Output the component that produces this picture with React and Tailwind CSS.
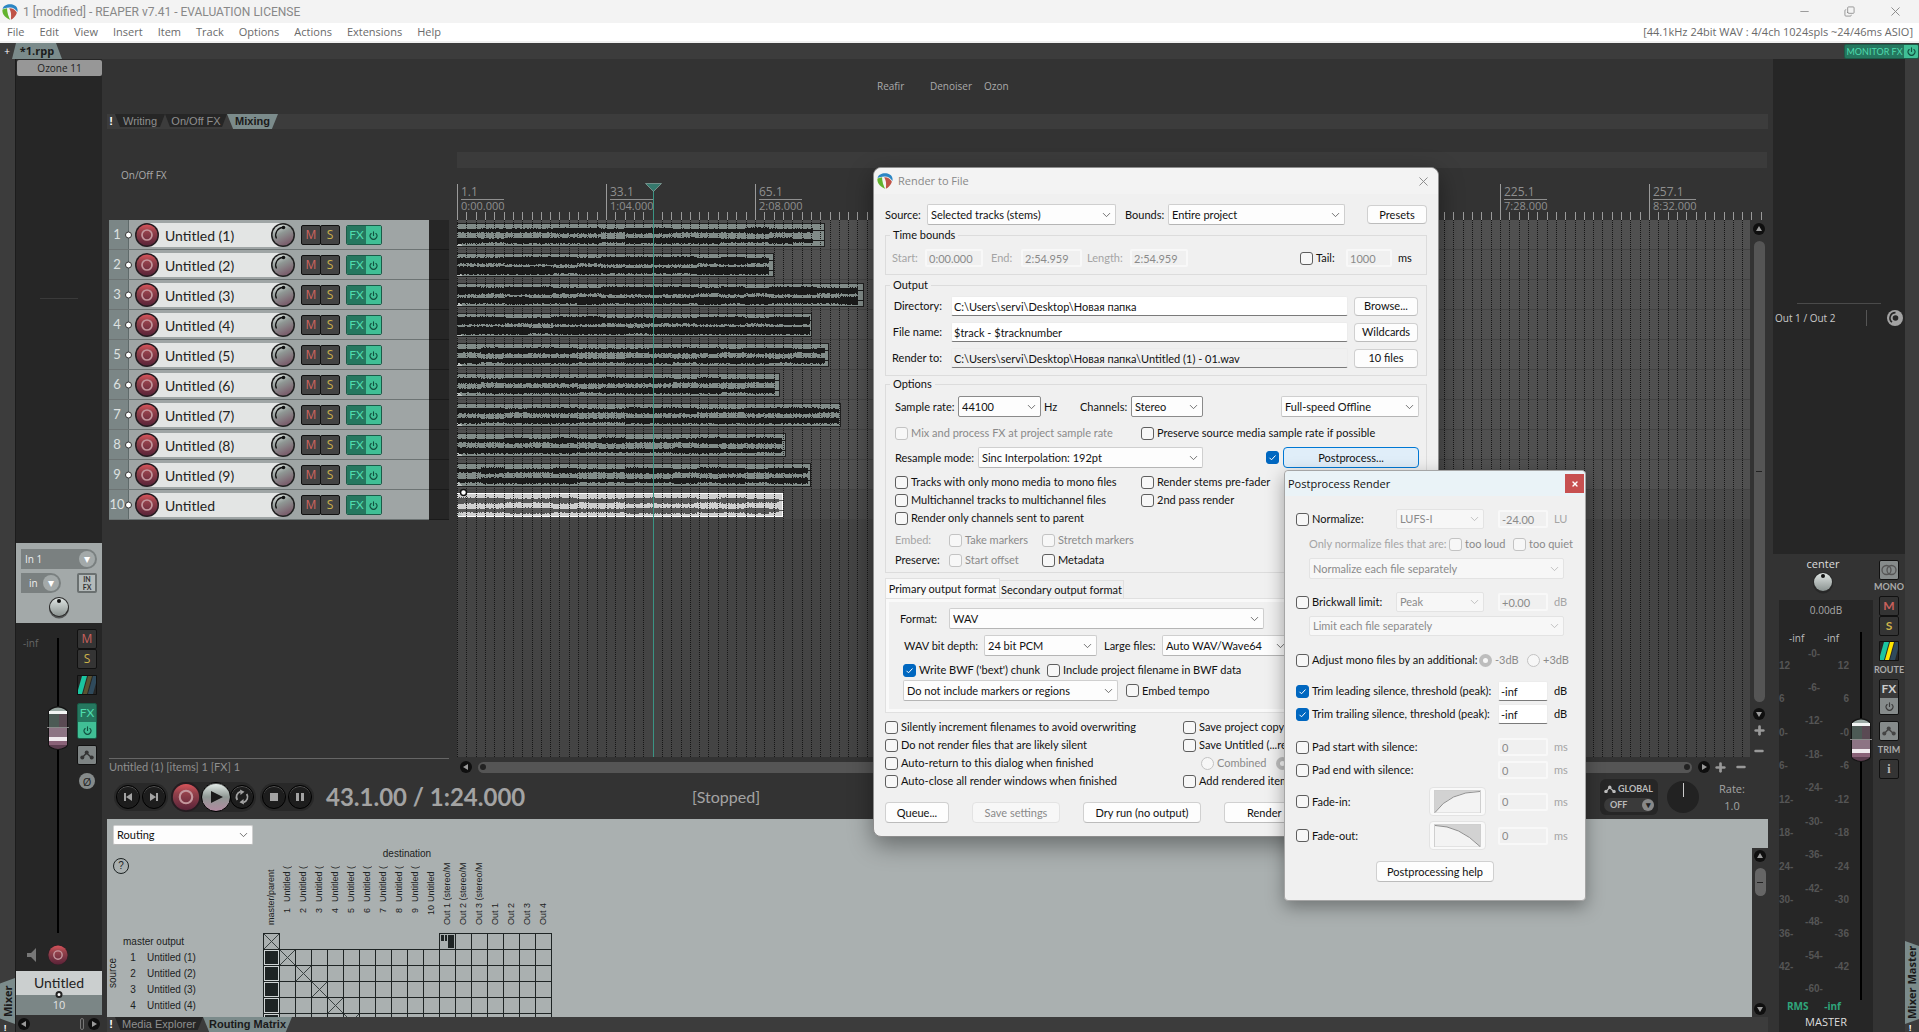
import React from "react";
import { ChevronDown, Power, Minus, Copy, X, Plus } from "lucide-react";

const TRACKS = [
  { n: 1, name: "Untitled (1)", len: 368, tail: 12, amp: 3 },
  { n: 2, name: "Untitled (2)", len: 317, tail: 5, amp: 4 },
  { n: 3, name: "Untitled (3)", len: 407, tail: 6, amp: 4 },
  { n: 4, name: "Untitled (4)", len: 355, tail: 2, amp: 4 },
  { n: 5, name: "Untitled (5)", len: 372, tail: 4, amp: 3 },
  { n: 6, name: "Untitled (6)", len: 323, tail: 5, amp: 3 },
  { n: 7, name: "Untitled (7)", len: 384, tail: 2, amp: 3 },
  { n: 8, name: "Untitled (8)", len: 329, tail: 4, amp: 3 },
  { n: 9, name: "Untitled (9)", len: 354, tail: 3, amp: 3 },
  { n: 10, name: "Untitled", len: 326, tail: 4, amp: 3, selected: true },
];

const RULER = [
  ["1.1", "0:00.000"], ["33.1", "1:04.000"], ["65.1", "2:08.000"], null, null, null, null,
  ["225.1", "7:28.000"], ["257.1", "8:32.000"],
];

const MENU = ["File", "Edit", "View", "Insert", "Item", "Track", "Options", "Actions", "Extensions", "Help"];

const DESTINATIONS = [
  "master/parent",
  ...TRACKS.map((t) => ({ n: t.n, name: t.n === 10 ? "Untitled" : "Untitled (" })),
  "Out 1 (stereo/M", "Out 2 (stereo/M", "Out 3 (stereo/M", "Out 1", "Out 2", "Out 3", "Out 4",
];

const INNER_SCALE = ["-0-", "-6-", "-12-", "-18-", "-24-", "-30-", "-36-", "-42-", "-48-", "-54-", "-60-"];
const OUTER_SCALE = ["12", "6", "0", "6", "12", "18", "24", "30", "36", "42"];

/* ---------- drawings ---------- */

function Logo({ className }) {
  return (
    <svg viewBox="0 0 16 16" className={className} aria-hidden="true">
      <path d="M.6 5C1.4 1.8 4.4.3 8 .3s6.600 1.500 7.400 4.700c.3 1.200.2 2.100 0 3C13.800 5 11 3.200 7.600 3.400 4.800 3.500 2.200 4.300.6 5z" fill="#2c86c4" />
      <path d="M.5 5.600c1.500-.9 3.200-1.300 4.700-1.400L8 15.700C3.800 14.200-.3 10 .5 5.600z" fill="#62b32e" />
      <path d="M7.200 4.200c3.400-.2 6.400 1.600 7.700 4.600-.9 3.300-3.600 6-6.100 6.900 .6-4 .6-8.200-1.600-11.500z" fill="#bf5347" />
      <path d="M5.200 3.800c2.800 1.600 3.900 5.600 3.300 11.900-2-2.600-3.600-7-3.300-11.900z" fill="#f4f4f4" />
    </svg>
  );
}

function RouteIcon({ bright, className }) {
  return (
    <svg viewBox="0 0 20 20" className={className} aria-hidden="true">
      <rect width="20" height="20" rx="1" fill="#111" />
      <rect x="1" y="1" width="18" height="18" fill="#262626" />
      <path d="M5 1h5L5 19H1v-4z" fill="#1bc5a0" />
      <path d="M11 1h4L10 19H6z" fill={bright ? "#ffe600" : "#5b5330"} />
      <path d="M16 1h3v7l-3 11h-5z" fill="#2f4a5c" />
    </svg>
  );
}

function EnvelopeIcon({ className }) {
  return (
    <svg viewBox="0 0 14 10" className={className} aria-hidden="true">
      <path d="M2 8 6.500 3 12 8" fill="none" stroke="currentColor" strokeWidth="1.500" />
      <circle cx="2.300" cy="7.600" r="2" fill="currentColor" />
      <circle cx="6.700" cy="2.600" r="2" fill="currentColor" />
      <circle cx="11.700" cy="7.600" r="2" fill="currentColor" />
    </svg>
  );
}

function RecordIcon({ className, plain }) {
  return (
    <svg viewBox="0 0 24 24" className={className} aria-hidden="true">
      <defs>
        <linearGradient id="rec" x1="0" y1="0" x2="0" y2="1">
          <stop offset="0" stopColor="#d8545a" />
          <stop offset=".35" stopColor="#93414b" />
          <stop offset="1" stopColor="#5a2338" />
        </linearGradient>
      </defs>
      <circle cx="12" cy="12" r="12" fill={plain ? "#3a1a26" : "#241c20"} />
      <circle cx="12" cy="12" r={plain ? 11.500 : 10.500} fill="url(#rec)" />
      <circle cx="12" cy="12" r="5" fill="none" stroke="#c3979d" strokeWidth="1.700" />
    </svg>
  );
}

function PanKnob({ className }) {
  return (
    <svg viewBox="0 0 24 24" className={className} aria-hidden="true">
      <defs>
        <linearGradient id="pan" x1="0" y1="0" x2=".5" y2="1">
          <stop offset="0" stopColor="#e8eeec" />
          <stop offset=".5" stopColor="#8f9794" />
          <stop offset="1" stopColor="#7b5f6d" />
        </linearGradient>
      </defs>
      <circle cx="12" cy="12" r="12" fill="#202020" />
      <circle cx="12" cy="12" r="10.500" fill="url(#pan)" />
      <path d="M12 4.500a7.600 7.600 0 0 0-6.500 11" fill="none" stroke="#111" strokeWidth="1.300" />
      <circle cx="12.500" cy="4.500" r="1.800" fill="#111" />
    </svg>
  );
}

function RoundKnob({ className }) {
  return (
    <svg viewBox="0 0 20 22" className={className} aria-hidden="true">
      <defs>
        <linearGradient id="knob" x1="0" y1="0" x2="0" y2="1">
          <stop offset="0" stopColor="#dfe5e3" />
          <stop offset="1" stopColor="#8b9391" />
        </linearGradient>
      </defs>
      <circle cx="10" cy="11.500" r="10" fill="#222" opacity=".6" />
      <circle cx="10" cy="10" r="10" fill="#2a2a2a" />
      <circle cx="10" cy="10" r="9" fill="url(#knob)" />
      <circle cx="10" cy="4" r="2" fill="#111" />
    </svg>
  );
}

function FaderThumb({ className }) {
  return (
    <svg viewBox="0 0 22 44" className={className} aria-hidden="true">
      <path d="M1 6Q2 1 11 0q9 1 10 6v33q-1 4-10 5-9-1-10-5z" fill="#141414" />
      <path d="M2 6q2-4 9-4.500Q18 2 20 6z" fill="#9aa8a3" />
      <rect x="2" y="5" width="18" height="3" fill="#f2f4f3" />
      <rect x="2" y="8" width="18" height="13" fill="#4c5a55" />
      <rect x="12" y="8" width="8" height="13" fill="#5a4a53" />
      <rect x="0" y="21" width="22" height="1" fill="#8a8a8a" />
      <rect x="2" y="22" width="18" height="11" fill="#8d7484" />
      <rect x="2" y="31" width="18" height="4" fill="#f0eaee" />
      <rect x="2" y="35" width="18" height="4" fill="#8a6278" />
      <path d="M2 39h18q-2 3-9 4-7-1-9-4z" fill="#5d3f51" />
    </svg>
  );
}

// Deterministic noise, so that each clip keeps the same shape between renders
function noise(seed) {
  let s = seed * 7919 + 17;
  return () => {
    s = (s * 1103515245 + 12345) % 2147483648;
    return s / 2147483648;
  };
}

function wavePath(track, cy, seed) {
  const rnd = noise(seed);
  let d = "";
  let level = track.amp - 1;
  let spiky = 0.3;
  const end = track.len - track.tail;
  for (let x = 0; x < end; x++) {
    if (x % 24 === 0) {
      level = track.amp - (rnd() < 0.4 ? 1 : 0);
      spiky = rnd() * 0.4;
    }
    const up = level + (rnd() < spiky ? 1 : 0);
    const down = level - 1 + (rnd() < 0.6 ? 1 : 0);
    d += `M${x} ${cy - up}h1v${up + down}h-1z`;
  }
  return `${d}M${end} ${cy - 1}H${track.len}v1H${end}z`;
}

function Clip({ track }) {
  const sel = track.selected;
  return (
    <svg width={track.len} height="24" className="block" shapeRendering="crispEdges" aria-hidden="true">
      <rect width={track.len} height="24" fill={sel ? "#ffffff" : "#1f1f1f"} />
      <rect y="1" width={track.len - 1} height="22" fill={sel ? "#cfcfcf" : "#818b88"} />
      <path d="M0 18l5 5H0z" fill="#b9bfbd" />
      <path d={wavePath(track, 8, track.n)} fill={sel ? "#555555" : "#1a1a1a"} />
      <path d={wavePath(track, 18, track.n + 40)} fill={sel ? "#555555" : "#1a1a1a"} />
    </svg>
  );
}

function ArrowDot({ dir = "up", className = "" }) {
  const points = {
    up: "6,3 9,8 3,8", down: "6,9 9,4 3,4", left: "3,6 8,3 8,9", right: "9,6 4,3 4,9",
  };
  return (
    <svg viewBox="0 0 12 12" className={`size-3 shrink-0 ${className}`} aria-hidden="true">
      <circle cx="6" cy="6" r="6" fill="#0f0f0f" />
      <polygon points={points[dir]} fill="#9a9a9a" />
    </svg>
  );
}

/* ---------- mixer buttons ---------- */

function SmallButton({ children, label, bg = "bg-[#343434]", className = "" }) {
  return (
    <button type="button" aria-label={label} className={`flex size-5 shrink-0 items-center justify-center rounded-xs border border-[#111] text-[12px] leading-none ${bg} ${className}`}>
      {children}
    </button>
  );
}

function StackedFx({ on }) {
  return (
    <div className={`flex w-5 flex-col overflow-hidden rounded-xs border ${on ? "border-[#1a5c48]" : "border-[#111]"}`}>
      <button type="button" className={`flex h-[18px] items-center justify-center font-['Lato',sans-serif] text-[12px] leading-none ${on ? "bg-[#25775f] text-[#4fdcae]" : "bg-[#3a3a3a] text-[#ccc]"}`}>FX</button>
      <button type="button" aria-label="Bypass FX" className={`flex h-4 items-center justify-center ${on ? "bg-[#40bf95] text-[#125240]" : "bg-[#868b8b] text-[#3a3a3a]"}`}>
        <Power size={9} strokeWidth={3} />
      </button>
    </div>
  );
}

function LeftMixer() {
  return (
    <aside className="flex w-[87px] shrink-0 flex-col border-l border-[#1c1c1c] bg-[#262626] text-[11px] font-['Open_Sans',sans-serif]">
      <button type="button" className="mt-px ml-px h-4 rounded-xs bg-[#979797] text-[10px] leading-4 text-[#222]">Ozone 11</button>
      <div className="mx-6 mt-[222px] h-px bg-[#3a3a3a]" />
      <div className="flex-1" />
      <div className="flex h-20 flex-col bg-[#a3a9a9] px-[5px] pt-1.5">
        <button type="button" className="flex h-5 items-center justify-between rounded-l-xs rounded-r-full bg-[#7a8080] pr-0.5 pl-1 text-[10px] text-[#eee]">
          In 1
          <span className="flex size-4 items-center justify-center rounded-full bg-[#a3a9a9] text-[12px] text-white">▾</span>
        </button>
        <div className="mt-1 flex justify-between">
          <button type="button" className="flex h-5 w-10 items-center justify-between rounded-l-xs rounded-r-full bg-[#7a8080] pr-0.5 pl-2 text-[10px] text-[#eee]">
            in
            <span className="flex size-4 items-center justify-center rounded-full bg-[#a3a9a9] text-[12px] text-white">▾</span>
          </button>
          <button type="button" className="flex size-5 flex-col items-center justify-center rounded-xs border-2 border-[#6a7070] bg-[#b4baba] font-['Lato',sans-serif] text-[7px] leading-[8px] font-bold text-[#333]">
            <span>IN</span><span>FX</span>
          </button>
        </div>
        <RoundKnob className="mt-1 w-5 self-center" />
      </div>

      <div className="flex h-[348px] pt-1.5 pr-[5px]">
        <div className="flex w-[31px] flex-col justify-between pl-[7px]">
          <span className="mt-1.5 text-[10px] leading-4 text-[#666]">-inf</span>
          <svg viewBox="0 0 10 14" className="mb-[9px] ml-1 h-3.5 w-2.5" aria-hidden="true"><path d="M0 5h4l5-5v14L4 9H0z" fill="#777" /></svg>
        </div>
        <div className="flex w-[22px] flex-col items-center">
          <div className="mt-[9px] h-[68px] w-[2px] bg-black" />
          <FaderThumb className="w-[22px]" />
          <div className="h-[183px] w-[2px] bg-black" />
          <RecordIcon plain className="mt-3 w-5" />
        </div>
        <div className="ml-auto flex w-5 flex-col items-center">
          <SmallButton label="Mute" className="text-[#c9605c]">M</SmallButton>
          <SmallButton label="Solo" className="text-[#cdb24a]">S</SmallButton>
          <RouteIcon className="mt-1.5 w-5 shrink-0" />
          <div className="mt-2"><StackedFx on /></div>
          <SmallButton label="Envelopes" bg="bg-[#7e8484]" className="mt-1.5 text-[#333]"><EnvelopeIcon className="w-3.5" /></SmallButton>
          <span className="mt-2 flex size-4 items-center justify-center rounded-full bg-[#868b8b] text-[11px] leading-none text-[#222]">Ø</span>
        </div>
      </div>

      <div className="h-6 bg-[#cbcfcf] text-center font-['Lato',sans-serif] text-[14px] leading-6 text-[#222]">Untitled</div>
      <div className="relative h-5 bg-[#7b8686] text-center text-[11px] leading-5 text-[#e2e2e2]">
        <span className="absolute -top-1 left-1/2 size-[7px] -translate-x-1/2 rounded-full border-2 border-[#222] bg-white" />
        10
      </div>
      <div className="flex h-[17px] items-center bg-[#333] px-0.5">
        <ArrowDot dir="left" />
        <span className="mr-1 ml-auto h-3 w-1 rounded-full border border-[#777]" />
        <ArrowDot dir="right" />
      </div>
    </aside>
  );
}

function MasterMixer() {
  return (
    <aside className="ml-[5px] flex w-[132px] shrink-0 flex-col bg-[#333] text-[11px] font-['Open_Sans',sans-serif]">
      <div className="flex min-h-0 flex-1 flex-col bg-[#262626]">
        <div className="mx-6 mt-[244px] h-px bg-[#4a4a4a]" />
        <div className="mt-1.5 flex items-center pr-0.5 pl-0.5 text-[10px] text-[#c8c8c8]">
          <span>Out 1 / Out 2</span>
          <span className="mr-5 ml-auto h-4 w-px bg-[#555]" />
          <svg viewBox="0 0 16 16" className="w-4" aria-hidden="true">
            <circle cx="8" cy="8" r="8" fill="#a3a3a3" />
            <path d="M8.500 2.600a5.400 5.400 0 0 0-3.500 9.600" fill="none" stroke="#262626" strokeWidth="1.600" />
            <circle cx="8.500" cy="8" r="2.800" fill="#262626" />
          </svg>
        </div>
      </div>

      <div className="flex h-[478px] shrink-0">
        <div className="ml-1.5 flex w-[94px] flex-col">
          <div className="flex h-[46px] shrink-0 flex-col items-center pt-0.5 pr-1.5">
            <span className="text-[11px] leading-4 text-[#ddd]">center</span>
            <RoundKnob className="w-5" />
          </div>
          <div className="flex min-h-0 flex-1 flex-col bg-[#262626]">
            <span className="pt-1 text-center text-[10px] leading-3 text-[#aaa]">0.00dB</span>
            <div className="mt-4 flex flex-1">
              <div className="flex w-[70px] flex-col">
                <div className="flex justify-between px-2.5 text-[10px] leading-3 text-[#bbb]"><span>-inf</span><span>-inf</span></div>
                <div className="mt-1 flex justify-between font-['Liberation_Sans',sans-serif] text-[10px] leading-3 font-bold text-[#555]">
                  <div className="mt-3 flex h-[313px] w-4 flex-col justify-between">
                    {OUTER_SCALE.map((v, i) => <span key={i}>{i > 1 ? `${v}-` : v}</span>)}
                  </div>
                  <div className="flex h-[347px] flex-col items-center justify-between">
                    {INNER_SCALE.map((v) => <span key={v}>{v}</span>)}
                  </div>
                  <div className="mt-3 flex h-[313px] w-4 flex-col items-end justify-between">
                    {OUTER_SCALE.map((v, i) => <span key={i}>{i > 1 ? `-${v}` : v}</span>)}
                  </div>
                </div>
              </div>
              <div className="ml-px flex w-[22px] flex-col items-center">
                <div className="h-[86px] w-[2px] bg-black" />
                <FaderThumb className="w-[22px]" />
                <div className="h-[238px] w-[2px] bg-black" />
              </div>
            </div>
            <div className="flex h-3 w-[70px] shrink-0 items-center justify-between px-2 text-[10px] leading-3 font-bold text-[#2fa57c]"><span>RMS</span><span>-inf</span></div>
            <span className="shrink-0 pb-0.5 text-center text-[11px] leading-[19px] text-[#ddd]">MASTER</span>
          </div>
        </div>
        <div className="flex flex-1 flex-col items-center pt-1.5 font-['Lato',sans-serif] text-[9px] leading-[14px] font-bold text-[#aaa]">
          <SmallButton label="Mono" bg="bg-[#868b8b]" className="text-[#555]">
            <svg viewBox="0 0 16 12" className="w-4" aria-hidden="true" fill="none" stroke="currentColor" strokeWidth="1.300"><circle cx="5.500" cy="6" r="4.500" /><circle cx="10.500" cy="6" r="4.500" /></svg>
          </SmallButton>
          <span className="mb-0.5">MONO</span>
          <SmallButton label="Mute" className="text-[#c9605c]">M</SmallButton>
          <SmallButton label="Solo" className="text-[#cdb24a]">S</SmallButton>
          <RouteIcon bright className="mt-[5px] w-5 shrink-0" />
          <span className="mt-0.5 mb-0.5">ROUTE</span>
          <StackedFx />
          <SmallButton label="Trim envelope" bg="bg-[#868b8b]" className="mt-1.5 text-[#444]"><EnvelopeIcon className="w-3.5" /></SmallButton>
          <span className="mt-0.5 mb-0.5">TRIM</span>
          <SmallButton label="Project info" className="font-['Liberation_Serif',serif] font-bold text-[#bbb]">i</SmallButton>
        </div>
      </div>
    </aside>
  );
}

/* ---------- arrange view ---------- */

function TrackPanel() {
  return (
    <div className="ml-0.5 w-[340px]">
      {TRACKS.map((t) => (
        <div key={t.n} className="flex h-[30px] border-b border-[#6d7474] bg-[#9fa5a5]">
          <div className="relative flex w-5 items-center border-r border-[#5f6a6a] bg-[#7b8686] font-['Lato',sans-serif] text-[13px] text-[#dde1e1]">
            <span className="w-4 text-center">{t.n}</span>
            <span className="absolute top-1/2 -right-1 size-[7px] -translate-y-1/2 rounded-full border border-[#333] bg-white" />
          </div>
          <div className="flex flex-1 items-center pt-px pl-1.5">
            <button type="button" aria-label={`Record arm ${t.n}`} className="z-10"><RecordIcon className="block w-6" /></button>
            <div className="-mx-3 flex h-6 w-[136px] items-center bg-[#e3e5e4] pl-[18px] font-['Lato',sans-serif] text-[14px] text-[#222]">{t.name}</div>
            <button type="button" aria-label={`Pan ${t.n}`} className="z-10 mr-1.5"><PanKnob className="block w-6" /></button>
            <SmallButton label={`Mute ${t.n}`} bg="bg-[#434343]" className="text-[#d0645f]">M</SmallButton>
            <SmallButton label={`Solo ${t.n}`} bg="bg-[#434343]" className="-ml-px text-[#cdb24a]">S</SmallButton>
            <div className="ml-1.5 flex h-5 w-9 overflow-hidden rounded-xs border border-[#1a5c48]">
              <button type="button" className="w-[19px] bg-[#25775f] font-['Lato',sans-serif] text-[12px] leading-none text-[#4fdcae]">FX</button>
              <button type="button" aria-label={`Bypass FX ${t.n}`} className="flex flex-1 items-center justify-center bg-[#40bf95] text-[#125240]"><Power size={9} strokeWidth={3} /></button>
            </div>
          </div>
          <div className="-mb-px w-5 border-b border-[#1a1a1a] bg-[#262626]" />
        </div>
      ))}
    </div>
  );
}

function Ruler() {
  return (
    <div className="flex h-9 shrink-0 overflow-hidden font-['Open_Sans',sans-serif] text-[#8f8f8f]">
      {RULER.map((cell, i) => (
        <div key={i} className="flex w-[149px] shrink-0 flex-col justify-between border-l border-[#9a9a9a]">
          <div className="ml-[3px] h-7 pt-px">
            {cell && (
              <>
                <div className="w-[43px] border-b border-[#8f8f8f] text-[12px] leading-[14px]">{cell[0]}</div>
                <div className="text-[11px] leading-[12px]">{cell[1]}</div>
              </>
            )}
          </div>
          <svg width="148" height="8" className="block" shapeRendering="crispEdges" aria-hidden="true">
            {Array.from({ length: 15 }, (_, k) => (
              <rect key={k} x={Math.round(((k + 1) * 149) / 16) - 1} width="1" height="8" fill="#9a9a9a" />
            ))}
          </svg>
        </div>
      ))}
    </div>
  );
}

function Arrange() {
  return (
    <div className="relative flex min-h-0 flex-1 flex-col">
      <Ruler />
      <div className="flex min-h-0 flex-1">
        <div className="relative min-w-0 flex-1 overflow-hidden bg-[#444]">
          {TRACKS.map((t) => (
            <div key={t.n} className={`h-[30px] border-b border-[#434343] pt-[3px] ${t.selected ? "bg-[#4a4a4a]" : "bg-[#505050]"}`}>
              <Clip track={t} />
            </div>
          ))}
          <svg className="absolute inset-0 h-full w-full" shapeRendering="crispEdges" aria-hidden="true">
            {Array.from({ length: 139 }, (_, i) => {
              const x = Math.round((i * 149) / 16) + 0.5;
              return <line key={i} x1={x} x2={x} y1="0" y2="100%" stroke="#161616" strokeDasharray="1 1" />;
            })}
            <circle cx="6.500" cy="272.500" r="3" fill="#fff" stroke="#111" strokeWidth="1.500" shapeRendering="auto" />
          </svg>
        </div>
        <div className="flex w-[18px] flex-col items-center pt-[3px] text-[#999]">
          <ArrowDot dir="up" />
          <div className="my-1.5 flex w-[11px] flex-1 items-center justify-center rounded-full bg-[#555]"><span className="h-px w-1.5 bg-[#222]" /></div>
          <ArrowDot dir="down" />
          <Plus size={13} strokeWidth={5} className="mt-1" />
          <Minus size={12} strokeWidth={5} className="mt-2" />
        </div>
      </div>
      <div className="flex h-[19px] items-center pt-px pl-[3px] text-[#999]">
        <ArrowDot dir="left" />
        <div className="mx-1.5 flex h-[11px] flex-1 items-center justify-between rounded-full bg-[#555] px-0.5">
          <span className="size-1.5 rounded-full bg-[#222]" /><span className="size-1.5 rounded-full bg-[#222]" />
        </div>
        <ArrowDot dir="right" />
        <Plus size={13} strokeWidth={5} className="ml-1" />
        <Minus size={12} strokeWidth={5} className="mr-[21px] ml-2" />
      </div>
      {/* Edit cursor */}
      <div className="absolute top-0 bottom-[19px] left-[196px] w-px bg-[#3a9484]" />
      <svg viewBox="0 0 17 9" className="absolute top-[-1px] left-[188px] w-[17px]" aria-hidden="true"><path d="M.5.500h16L8.500 8.500z" fill="#35796d" stroke="#8fa9a4" strokeWidth=".7" /></svg>
    </div>
  );
}

function RoundButton({ label, children, className = "size-6 bg-[#1d1d1d]" }) {
  return (
    <button type="button" aria-label={label} className={`flex shrink-0 items-center justify-center rounded-full border border-black shadow-[inset_0_1px_0_#555] ${className}`}>
      {children}
    </button>
  );
}

function Transport() {
  return (
    <div className="flex h-[43px] shrink-0 items-center pb-px pl-[7px] text-[#a3a3a3]">
      <div className="flex items-center gap-0.5 rounded-full bg-[#282828] px-0.5 py-0.5">
        <RoundButton label="Go to start"><svg viewBox="0 0 10 10" className="w-2.5" fill="currentColor"><path d="M1 1h2v8H1zM9 1v8L3 5z" /></svg></RoundButton>
        <RoundButton label="Go to end"><svg viewBox="0 0 10 10" className="w-2.5" fill="currentColor"><path d="M7 1h2v8H7zM1 1v8l6-4z" /></svg></RoundButton>
      </div>
      <div className="ml-[3px] flex items-center rounded-full bg-[#282828] pr-0.5">
        <RecordIcon className="w-[30px]" />
        <RoundButton label="Play" className="size-[30px] bg-linear-to-b from-[#e9f2ee] via-[#8f9894] to-[#b08aa0] text-[#1a1a1a]"><svg viewBox="0 0 10 10" className="ml-0.5 w-3" fill="currentColor"><path d="M0 0v10l10-5z" /></svg></RoundButton>
        <RoundButton label="Repeat" className="-ml-px size-6 bg-[#1d1d1d]">
          <svg viewBox="0 0 16 16" className="w-4" fill="none" stroke="currentColor" strokeWidth="1.800"><path d="M3.300 11A5.500 5.500 0 0 1 6.500 2.700M12.700 5A5.500 5.500 0 0 1 9.500 13.300" /><path d="M6 .5 10.500 2.700 6.500 6zM10 15.500 5.500 13.300 9.500 10z" fill="currentColor" stroke="none" /></svg>
        </RoundButton>
      </div>
      <div className="ml-1 flex items-center gap-0.5 rounded-full bg-[#282828] px-0.5 py-0.5">
        <RoundButton label="Stop"><span className="size-2 bg-[#a3a3a3]" /></RoundButton>
        <RoundButton label="Pause"><span className="h-2 w-2 border-x-3 border-[#a3a3a3]" /></RoundButton>
      </div>
      <span className="ml-3 w-[366px] font-['Lato',sans-serif] text-[24px] leading-none font-bold">43.1.00 / 1:24.000</span>
      <span className="text-[16px] leading-none font-['Lato',sans-serif]">[Stopped]</span>
      <div className="ml-auto flex h-9 w-[58px] flex-col justify-center gap-0.5 rounded-md bg-[#262626] px-1 font-['Lato',sans-serif] text-[9px] font-bold text-[#bbb]">
        <span className="flex items-center gap-0.5 leading-[14px]"><EnvelopeIcon className="w-3" />GLOBAL</span>
        <button type="button" className="flex h-[14px] items-center justify-between rounded-full bg-[#3a3a3a] pl-1.5">OFF<span className="flex size-3 items-center justify-center rounded-full bg-[#888] text-[9px] text-[#222]">▾</span></button>
      </div>
      <div className="ml-[9px] flex size-8 justify-center rounded-full bg-[#222] pt-0.5"><span className="h-3.5 w-px bg-[#ccc]" /></div>
      <div className="mr-[17px] ml-3.5 flex w-[38px] flex-col items-center font-['Open_Sans',sans-serif] text-[11px] leading-[17px]"><span>Rate:</span><span>1.0</span></div>
    </div>
  );
}

/* ---------- routing matrix ---------- */

function Cell({ row, col }) {
  if (row === 0 && col > 0 && col < 11) return <td className="p-0" />;
  const cross = row === col;
  return (
    <td className="h-4 border border-[#1e2424] p-0 text-[#3a4242]">
      {cross && <svg viewBox="0 0 15 15" className="block size-[15px]" aria-hidden="true"><path d="M0 0 15 15M15 0 0 15" stroke="currentColor" /></svg>}
      {row > 0 && col === 0 && <div className="size-[15px] border border-[#cfd4d4] bg-[#1e2424]" />}
      {row === 0 && col === 11 && <div className="flex h-[13px] gap-px px-px"><span className="h-1.5 w-[3px] bg-[#1e2424]" /><span className="h-1.5 w-[2px] bg-[#1e2424]" /><span className="w-1.5 bg-[#1e2424]" /></div>}
    </td>
  );
}

function RoutingMatrix() {
  return (
    <section className="flex h-[198px] shrink-0 bg-[#aab0b0] font-['Liberation_Sans',sans-serif] text-[10px] text-[#1c2222]">
      <div className="flex min-w-0 flex-1 flex-col overflow-hidden pl-1.5">
        <div className="mt-1.5 h-5 w-[140px] shrink-0">
          <Select id="matrix-mode" label="Matrix mode" value="Routing" className="h-5 w-full" />
        </div>
        <div className="flex">
          <div className="flex w-2.5 shrink-0 flex-col">
            <button type="button" aria-label="Help" className="mt-[13px] size-4 rounded-full border border-[#1c2222] text-[10px] leading-none">?</button>
            <span className="mt-[84px] -ml-1.5 w-3 rotate-180 leading-3 [writing-mode:vertical-rl]">source</span>
          </div>
          <table className="w-[428px] table-fixed border-collapse">
            <colgroup>
              <col className="w-5" /><col className="w-[120px]" />
              {DESTINATIONS.map((_, i) => <col key={i} className="w-4" />)}
            </colgroup>
            <thead>
              <tr>
                <td colSpan="2" />
                <th colSpan="18" className="h-[18px] p-0 pb-0.5 text-center align-bottom font-normal leading-[14px]">destination</th>
              </tr>
              <tr>
                <td colSpan="2" />
                {DESTINATIONS.map((d, i) => (
                  <th key={i} className="h-[70px] p-0 align-bottom text-[9px] font-normal">
                    <div className="flex h-[62px] w-4 rotate-180 items-center overflow-hidden leading-4 whitespace-nowrap [writing-mode:vertical-rl]">
                      {d.n ? <><span className="h-6 shrink-0 pt-2">{d.n}</span><span className="shrink-0">{d.name}</span></> : d}
                    </div>
                    <div className="h-2" />
                  </th>
                ))}
              </tr>
            </thead>
            <tbody>
              {[0, 1, 2, 3, 4, 5].map((r) => (
                <tr key={r} className="h-4 leading-[15px]">
                  {r === 0 ? <th colSpan="2" className="p-0 text-left font-normal">master output</th> : (
                    <>
                      <th className="p-0 text-center font-normal">{r < 5 ? r : ""}</th>
                      <th className="p-0 pl-1 text-left font-normal">{r < 5 ? `Untitled (${r})` : ""}</th>
                    </>
                  )}
                  {DESTINATIONS.map((_, c) => <Cell key={c} row={r} col={c} />)}
                </tr>
              ))}
            </tbody>
          </table>
        </div>
      </div>
      <div className="mt-[29px] flex w-4 flex-col items-center bg-[#333] py-0.5">
        <ArrowDot dir="up" />
        <div className="mt-1.5 flex h-7 w-[11px] items-center justify-center rounded-full bg-[#666]"><span className="h-px w-1.5 bg-[#222]" /></div>
        <ArrowDot dir="down" className="mt-auto" />
      </div>
    </section>
  );
}

/* ---------- dialog controls ---------- */

function Select({ id, label, value, className = "", disabled, strong }) {
  const border = strong ? "border-[#8a8a8a]" : disabled ? "border-[#e3e3e3]" : "border-[#cfcfcf] border-b-[#b5b5b5]";
  return (
    <div className={`relative shrink-0 ${className}`}>
      <select id={id} aria-label={label} disabled={disabled} defaultValue={value} className={`h-full w-full appearance-none rounded-xs border pl-[3px] font-['Lato',sans-serif] text-[11px] opacity-100 ${border} ${disabled ? "bg-[#f7f7f7] text-[#8a8a8a]" : "bg-[#fdfdfd] text-[#111]"}`}>
        <option>{value}</option>
      </select>
      <ChevronDown size={13} strokeWidth={1.500} className={`pointer-events-none absolute top-1/2 right-[3px] -translate-y-1/2 ${disabled ? "text-[#b5b5b5]" : "text-[#555]"}`} />
    </div>
  );
}

function Check({ label, checked, disabled, className = "", name }) {
  return (
    <label className={`flex items-center gap-[3px] whitespace-nowrap ${disabled ? "text-[#8a8a8a]" : "text-[#111]"} ${className}`}>
      <span className="relative flex size-[13px] shrink-0">
        <input type="checkbox" aria-label={label ? undefined : name} defaultChecked={checked} disabled={disabled} className="peer size-[13px] appearance-none rounded-[3px] border border-[#5e5e5e] bg-[#f7f7f7] checked:border-[#0067c0] checked:bg-[#0067c0] disabled:border-[#c3c3c3]" />
        <svg viewBox="0 0 13 13" className="pointer-events-none absolute inset-0 hidden peer-checked:block" aria-hidden="true"><path d="m3.500 6.800 2 2 4-4.300" fill="none" stroke="#fff" /></svg>
      </span>
      {label}
    </label>
  );
}

function Radio({ label, name, checked, className = "" }) {
  return (
    <label className={`flex items-center gap-[3px] text-[#8a8a8a] ${className}`}>
      <input type="radio" name={name} disabled defaultChecked={checked} aria-label={label || "Separate"} className="size-[13px] shrink-0 appearance-none rounded-full border border-[#c3c3c3] bg-[#f7f7f7] checked:border-4 checked:border-[#bdbdbd]" />
      {label}
    </label>
  );
}

function Text({ id, label, value, disabled, readOnly, className = "" }) {
  const look = disabled
    ? "border-2 border-[#f8f8f8] bg-[#f0f0f0] text-[#8a8a8a]"
    : `border border-[#ececec] border-b-[#7a7a7a] text-[#111] ${readOnly ? "bg-[#f0f0f0]" : "bg-white"}`;
  return <input id={id} type="text" aria-label={label} defaultValue={value} disabled={disabled} readOnly={readOnly} className={`min-w-0 shrink-0 rounded-xs pl-0.5 ${look} ${className}`} />;
}

function Button({ children, disabled, className = "" }) {
  return (
    <button type="button" disabled={disabled} className={`shrink-0 rounded-sm border whitespace-nowrap ${disabled ? "border-[#e3e3e3] bg-[#f7f7f7] text-[#8a8a8a]" : "border-[#d0d0d0] border-b-[#bcbcbc] bg-[#fdfdfd] text-[#111]"} ${className}`}>
      {children}
    </button>
  );
}

function Group({ title, children, className }) {
  return (
    <fieldset className={`min-w-0 border border-[#dcdcdc] ${className}`}>
      <legend className="ml-1 px-[3px] leading-[14px]">{title}</legend>
      {children}
    </fieldset>
  );
}

function RenderDialog() {
  return (
    <div role="dialog" aria-label="Render to File" className="absolute top-[167px] left-[873px] w-[566px] rounded-lg border border-[#8d8d8d] bg-[#f0f0f0] font-['Lato',sans-serif] text-[11px] leading-[14px] text-[#111] shadow-[0_8px_24px_rgba(0,0,0,0.4)]">
      <div className="flex h-[26px] items-center rounded-t-lg bg-[#f3f3f3] pr-[7px] pl-[3px]">
        <Logo className="w-4" />
        <span className="ml-[5px] font-['Open_Sans',sans-serif] text-[11px] text-[#888]">Render to File</span>
        <button type="button" aria-label="Close dialog" className="ml-auto text-[#888]"><X size={15} strokeWidth={1.500} /></button>
      </div>

      <div className="px-[11px] pb-[13px]">
        <div className="mt-2.5 flex h-[21px] items-center">
          <label htmlFor="source" className="w-[42px]">Source:</label>
          <Select id="source" value="Selected tracks (stems)" className="h-[21px] w-[189px]" />
          <label htmlFor="bounds" className="ml-[9px] w-[43px]">Bounds:</label>
          <Select id="bounds" value="Entire project" className="h-[21px] w-[177px]" />
          <Button className="ml-auto h-[19px] w-[60px]">Presets</Button>
        </div>

        <Group title="Time bounds" className="mt-[3px] pt-[7px] pb-[7px]">
          <div className="flex h-[18px] items-center pl-1.5 text-[#a5a5a5]">
            <label htmlFor="start" className="w-[33px]">Start:</label>
            <Text id="start" value="0:00.000" disabled className="h-[18px] w-[58px]" />
            <label htmlFor="end" className="ml-2 w-[30px]">End:</label>
            <Text id="end" value="2:54.959" disabled className="h-[18px] w-[61px]" />
            <label htmlFor="length" className="ml-[5px] w-[43px]">Length:</label>
            <Text id="length" value="2:54.959" disabled className="h-[18px] w-[58px]" />
            <Check label="Tail:" className="ml-auto w-[46px]" />
            <Text label="Tail length" value="1000" disabled className="h-[18px] w-[46px]" />
            <span className="mr-3 ml-1.5 w-4 text-[#111]">ms</span>
          </div>
        </Group>

        <Group title="Output" className="mt-[3px] pt-1 pb-[7px]">
          <div className="flex flex-col gap-1.5">
            {[
              ["dir", "Directory:", "C:\\Users\\servi\\Desktop\\Новая папка", "Browse..."],
              ["file", "File name:", "$track - $tracknumber", "Wildcards"],
              ["target", "Render to:", "C:\\Users\\servi\\Desktop\\Новая папка\\Untitled (1) - 01.wav", "10 files"],
            ].map(([id, label, value, action]) => (
              <div key={id} className="flex h-5 items-center pr-2">
                <label htmlFor={id} className="mr-[9px] w-14 text-right whitespace-nowrap">{label}</label>
                <Text id={id} value={value} readOnly={id === "target"} className="h-5 flex-1" />
                <Button className="ml-1.5 h-[19px] w-16">{action}</Button>
              </div>
            ))}
          </div>
        </Group>

        <Group title="Options" className="mt-px pt-[5px] pb-[3px]">
          <div className="flex h-[21px] items-center pr-[7px] pl-[9px]">
            <label htmlFor="rate" className="w-[63px]">Sample rate:</label>
            <Select id="rate" value="44100" strong className="h-[21px] w-[83px]" />
            <span className="w-[39px] pl-[3px]">Hz</span>
            <label htmlFor="channels" className="w-[51px]">Channels:</label>
            <Select id="channels" value="Stereo" strong className="h-[21px] w-[72px]" />
            <Select label="Render speed" value="Full-speed Offline" className="ml-auto h-[21px] w-[138px]" />
          </div>
          <div className="mt-[7px] grid h-[18px] grid-cols-[246px_1fr] items-center pl-[9px]">
            <Check label="Mix and process FX at project sample rate" disabled />
            <Check label="Preserve source media sample rate if possible" />
          </div>
          <div className="mt-[5px] flex h-[21px] items-center pr-[7px] pl-[9px]">
            <label htmlFor="resample" className="w-[83px]">Resample mode:</label>
            <Select id="resample" value="Sinc Interpolation: 192pt" className="h-[21px] w-[225px]" />
            <Check name="Enable postprocess" checked className="ml-auto" />
            <button type="button" className="ml-1 h-[21px] w-[136px] rounded-sm border border-[#0078d4] bg-[#e0eef9]">Postprocess...</button>
          </div>
          <div className="mt-[5px] grid auto-rows-[18px] grid-cols-[246px_1fr] items-center pl-[9px]">
            <Check label="Tracks with only mono media to mono files" />
            <Check label="Render stems pre-fader" />
            <Check label="Multichannel tracks to multichannel files" />
            <Check label="2nd pass render" />
            <Check label="Render only channels sent to parent" />
          </div>
          <div className="mt-1 grid auto-rows-[18px] grid-cols-[54px_93px_1fr] items-center gap-y-0.5 pl-[9px]">
            <span className="text-[#a5a5a5]">Embed:</span>
            <Check label="Take markers" disabled />
            <Check label="Stretch markers" disabled />
            <span>Preserve:</span>
            <Check label="Start offset" disabled />
            <Check label="Metadata" />
          </div>
        </Group>

        <div role="tablist" className="mt-[5px] flex h-5 items-end">
          <button type="button" role="tab" aria-selected="true" className="h-5 w-[115px] border border-b-0 border-[#e0e0e0] bg-[#f9f9f9] whitespace-nowrap">Primary output format</button>
          <button type="button" role="tab" aria-selected="false" className="h-[18px] w-[124px] border border-b-0 border-l-0 border-[#e0e0e0] whitespace-nowrap">Secondary output format</button>
        </div>
        <div className="border border-[#e0e0e0] bg-[#f9f9f9] p-[3px]">
          <div className="bg-[#f0f0f0] px-[11px] pt-1.5 pb-2">
            <div className="flex h-[21px] items-center">
              <label htmlFor="format" className="w-[49px]">Format:</label>
              <Select id="format" value="WAV" className="h-[21px] w-[315px]" />
            </div>
            <div className="mt-1.5 flex h-[21px] items-center pl-1">
              <label htmlFor="depth" className="w-[80px] whitespace-nowrap">WAV bit depth:</label>
              <Select id="depth" value="24 bit PCM" className="h-[21px] w-[113px]" />
              <label htmlFor="large" className="ml-[7px] w-[58px] whitespace-nowrap">Large files:</label>
              <Select id="large" value="Auto WAV/Wave64" className="h-[21px] w-[128px]" />
            </div>
            <div className="mt-[5px] flex h-[18px] items-center pl-[3px]">
              <Check label="Write BWF ('bext') chunk" checked className="w-[144px]" />
              <Check label="Include project filename in BWF data" />
            </div>
            <div className="mt-px flex h-[21px] items-center pl-[3px]">
              <Select label="Markers" value="Do not include markers or regions" className="h-[21px] w-[215px]" />
              <Check label="Embed tempo" className="ml-2" />
            </div>
          </div>
        </div>

        <div className="mt-[5px] grid auto-rows-[18px] grid-cols-[298px_1fr] items-center">
          <Check label="Silently increment filenames to avoid overwriting" />
          <Check label="Save project copy" />
          <Check label="Do not render files that are likely silent" />
          <Check label="Save Untitled (...re" />
          <Check label="Auto-return to this dialog when finished" />
          <div className="flex pl-[18px]">
            <Radio label="Combined" name="stems" className="w-[75px]" />
            <Radio name="stems" checked />
          </div>
          <Check label="Auto-close all render windows when finished" />
          <Check label="Add rendered item" />
        </div>

        <div className="mt-3 flex h-[21px]">
          <Button className="w-16">Queue...</Button>
          <Button disabled className="ml-[23px] w-[88px]">Save settings</Button>
          <Button className="ml-[23px] w-[118px]">Dry run (no output)</Button>
          <Button className="ml-[23px] w-[150px] pl-[22px] text-left">Render</Button>
        </div>
      </div>
    </div>
  );
}

function FadeButton({ label, area, curve }) {
  return (
    <button type="button" disabled aria-label={label} className="mr-3 h-[29px] w-[57px] rounded-sm border border-[#e3e3e3] bg-[#f9f9f9] px-1">
      <svg viewBox="0 0 48 24" className="w-full" aria-hidden="true">
        <rect x=".5" y=".5" width="47" height="23" fill="#f3f3f3" stroke="#cfcfcf" />
        <path d={area} fill="#d2d2d2" />
        <path d={curve} fill="none" stroke="#8d8d8d" />
      </svg>
    </button>
  );
}

function PostRow({ label, checked, value, unit, active, children, className }) {
  return (
    <div className={`flex items-center ${className}`}>
      <Check label={label} checked={checked} className="mr-auto" />
      {children}
      <Text label={`${label} value`} value={value} disabled={!active} className={active ? "h-5 w-[50px]" : "h-[18px] w-[50px]"} />
      <span className={`ml-1.5 w-[31px] ${active ? "" : "text-[#a5a5a5]"}`}>{unit}</span>
    </div>
  );
}

function PostprocessDialog() {
  return (
    <div role="dialog" aria-label="Postprocess Render" className="absolute top-[470px] left-[1284px] w-[302px] rounded-sm border border-[#a5a5a5] bg-[#f0f0f0] font-['Lato',sans-serif] text-[11px] leading-[14px] text-[#111] shadow-[0_6px_18px_rgba(0,0,0,0.35)]">
      <div className="flex h-[25px] items-center justify-between rounded-t-sm bg-[#eaf3f7] pr-px pl-[3px]">
        <span className="font-['Open_Sans',sans-serif] text-[11px]">Postprocess Render</span>
        <button type="button" aria-label="Close postprocess" className="flex h-[19px] w-[19px] items-center justify-center bg-[#c75050] text-white"><X size={8} strokeWidth={4} /></button>
      </div>
      <div className="pb-[18px] pl-[11px]">
        <PostRow label="Normalize:" value="-24.00" unit="LU" className="mt-[13px] h-5">
          <Select label="Normalize to" value="LUFS-I" disabled className="mr-3.5 h-5 w-[88px]" />
        </PostRow>
        <div className="mt-1.5 flex h-[18px] items-center pl-[13px] whitespace-nowrap text-[#a5a5a5]">
          <span className="w-[140px]">Only normalize files that are:</span>
          <Check label="too loud" disabled className="w-16" />
          <Check label="too quiet" disabled />
        </div>
        <Select label="Normalize mode" value="Normalize each file separately" disabled className="mt-[5px] ml-[13px] h-[21px] w-[255px]" />

        <PostRow label="Brickwall limit:" value="+0.00" unit="dB" className="mt-[13px] h-5">
          <Select label="Limit to" value="Peak" disabled className="mr-3.5 h-5 w-[88px]" />
        </PostRow>
        <Select label="Limit mode" value="Limit each file separately" disabled className="mt-1 ml-[13px] h-5 w-[255px]" />

        <div className="mt-[15px] flex h-[18px] items-center">
          <Check label="Adjust mono files by an additional:" className="w-[183px]" />
          <Radio label="-3dB" name="mono" checked className="w-12" />
          <Radio label="+3dB" name="mono" />
        </div>

        <PostRow label="Trim leading silence, threshold (peak):" checked value="-inf" unit="dB" active className="mt-3 h-5" />
        <PostRow label="Trim trailing silence, threshold (peak):" checked value="-inf" unit="dB" active className="mt-[3px] h-5" />
        <PostRow label="Pad start with silence:" value="0" unit="ms" className="mt-[13px] h-5" />
        <PostRow label="Pad end with silence:" value="0" unit="ms" className="mt-[3px] h-5" />
        <PostRow label="Fade-in:" value="0" unit="ms" className="mt-[7px] h-[29px]">
          <FadeButton label="Fade-in shape" area="M1 1H47Q16 2 1 23z" curve="M1 23Q16 2 47 1.500" />
        </PostRow>
        <PostRow label="Fade-out:" value="0" unit="ms" className="mt-[5px] h-[29px]">
          <FadeButton label="Fade-out shape" area="M1 1H47V23Q26 2 1 1.500z" curve="M1 1.500Q26 2 47 23" />
        </PostRow>
        <Button className="mt-[11px] ml-20 h-[21px] w-[118px]">Postprocessing help</Button>
      </div>
    </div>
  );
}

/* ---------- shell ---------- */

export default function App() {
  return (
    <div className="relative flex h-screen flex-col overflow-hidden bg-[#333] font-['Open_Sans',sans-serif]">
      <header className="flex h-[23px] shrink-0 items-center bg-[#f3f3f3] pr-4 pl-0.5 text-[#888]">
        <Logo className="w-4" />
        <h1 className="ml-[5px] font-['Roboto',sans-serif] text-[12px]">1 [modified] - REAPER v7.41 - EVALUATION LICENSE</h1>
        <div className="ml-auto flex items-center gap-[33px]">
          <button type="button" aria-label="Minimize"><Minus size={13} strokeWidth={1.500} /></button>
          <button type="button" aria-label="Restore"><Copy size={11} strokeWidth={1.800} className="-rotate-90" /></button>
          <button type="button" aria-label="Close"><X size={15} strokeWidth={1.500} /></button>
        </div>
      </header>
      <nav className="flex h-5 shrink-0 items-center justify-between border-b-2 border-[#f0f0f0] bg-white pr-1.5 text-[11px] text-[#6a6a6a]">
        <div className="flex gap-px">
          {MENU.map((m) => <button key={m} type="button" className="px-[7px]">{m}</button>)}
        </div>
        <span>[44.1kHz 24bit WAV : 4/4ch 1024spls ~24/46ms ASIO]</span>
      </nav>
      <div className="flex h-4 shrink-0 items-center bg-[#3c3c3c]">
        <button type="button" className="w-3 pl-0.5 text-[10px] leading-none text-white">+</button>
        <button type="button" className="h-4 w-[50px] bg-[#7b8b8b] text-[11px] leading-4 font-bold text-[#1a1a1a] [clip-path:polygon(8%_0,88%_0,100%_100%,0_100%)]">*1.rpp</button>
        <div className="ml-auto flex h-[15px] overflow-hidden rounded-xs border border-[#1a5c48] font-['Lato',sans-serif] text-[9px] leading-[13px]">
          <button type="button" className="w-[59px] bg-[#25775f] whitespace-nowrap text-[#4fdcae]">MONITOR FX</button>
          <button type="button" aria-label="Bypass monitor FX" className="flex w-[14px] items-center justify-center bg-[#40bf95] text-[#125240]"><Power size={9} strokeWidth={3} /></button>
        </div>
      </div>

      <div className="flex min-h-0 flex-1">
        <div className="flex w-[15px] shrink-0 flex-col justify-end bg-[#3c3c3c] text-[11px] font-bold">
          <button type="button" className="flex h-[46px] w-[15px] rotate-180 items-center justify-center bg-[#7b8b8b] leading-[15px] text-[#1a1a1a] [clip-path:polygon(0_0,100%_12%,100%_88%,0_100%)] [writing-mode:vertical-rl]">Mixer</button>
          <span className="h-2 pl-1 text-[8px] leading-[8px] text-white">!</span>
        </div>
        <LeftMixer />

        <main className="ml-[5px] flex min-w-0 flex-1 flex-col">
          <div className="flex h-[55px] shrink-0 items-center gap-x-[22px] pb-px pl-[770px] text-[10px] text-[#aaa]">
            <span className="w-[31px]">Reafir</span><span>Denoiser</span><span className="-ml-2.5">Ozon</span>
          </div>
          <div className="flex h-[15px] shrink-0 bg-[#3c3c3c] font-['Liberation_Sans',sans-serif] text-[11px] leading-[15px] text-[#8f8f8f]">
            <span className="w-2 text-center font-bold text-white">!</span>
            <button type="button" className="h-[13px] w-[50px] bg-[#262626] [clip-path:polygon(0_0,100%_0,90%_100%,10%_100%)]">Writing</button>
            <button type="button" className="h-[13px] w-[62px] bg-[#262626] [clip-path:polygon(0_0,100%_0,92%_100%,8%_100%)]">On/Off FX</button>
            <button type="button" className="w-[51px] bg-[#7b8b8b] font-bold text-[#1a1a1a] [clip-path:polygon(0_0,100%_0,88%_100%,12%_100%)]">Mixing</button>
          </div>
          <div className="flex min-h-0 flex-1">
            <div className="flex w-[350px] shrink-0 flex-col">
              <div className="flex h-[91px] shrink-0 items-center pt-0.5 pl-3.5 text-[10px] text-[#aaa]">On/Off FX</div>
              <TrackPanel />
              <div className="mr-2 ml-0.5 flex-1 border-b border-[#666]" />
              <div className="h-[17px] pl-0.5 font-['Lato',sans-serif] text-[11px] leading-4 text-[#8f8f8f]">Untitled (1) [items] 1 [FX] 1</div>
            </div>
            <div className="flex min-w-0 flex-1 flex-col">
              <div className="mt-[23px] mr-px mb-4 h-4 shrink-0 bg-[#3b3b3b]" />
              <Arrange />
            </div>
          </div>
          <Transport />
          <RoutingMatrix />
          <div className="flex h-[15px] shrink-0 bg-[#3c3c3c] font-['Liberation_Sans',sans-serif] text-[11px] leading-[15px] text-[#8f8f8f]">
            <span className="w-2 text-center font-bold text-white">!</span>
            <button type="button" className="h-[13px] w-[88px] bg-[#262626] [clip-path:polygon(0_0,100%_0,94%_100%,6%_100%)]">Media Explorer</button>
            <button type="button" className="w-[89px] bg-[#7b8b8b] font-bold text-[#1a1a1a] [clip-path:polygon(0_0,100%_0,93%_100%,7%_100%)]">Routing Matrix</button>
          </div>
        </main>

        <MasterMixer />
        <div className="flex w-[14px] shrink-0 flex-col justify-end bg-[#3c3c3c] text-[11px] font-bold">
          <button type="button" className="flex h-[83px] w-[14px] rotate-180 items-center justify-center bg-[#7b8b8b] leading-[14px] whitespace-nowrap text-[#1a1a1a] [clip-path:polygon(0_6%,100%_0,100%_100%,0_94%)] [writing-mode:vertical-rl]">Mixer Master</button>
          <span className="h-2 pl-1 text-[8px] leading-[8px] text-white">!</span>
        </div>
      </div>

      <RenderDialog />
      <PostprocessDialog />
    </div>
  );
}
